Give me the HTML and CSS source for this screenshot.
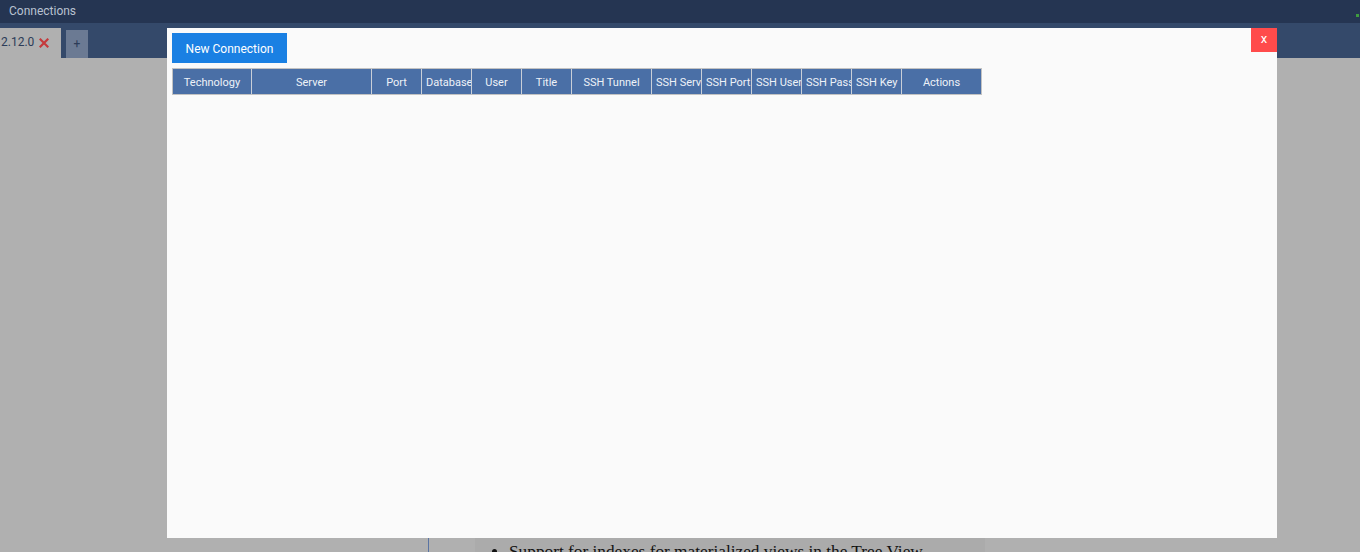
FILE: index.html
```html
<!DOCTYPE html>
<html lang="en">
<head>
    <meta charset="UTF-8">
    <title>Connections</title>
    <link rel="stylesheet" href="styles.css">
</head>
<body>
    <div class="title-bar">
        <span class="title">Connections</span>
        <span class="status-dot"></span>
    </div>

    <div class="tab-bar">
        <div class="tab active">
            <span class="tab-name">2.12.0</span>
            <svg class="tab-close" width="10" height="10" viewBox="0 0 10 10">
                <path d="M1.5 1.5 L8.5 8.5 M8.5 1.5 L1.5 8.5" stroke="#c53a3c" stroke-width="2.2" stroke-linecap="square"/>
            </svg>
        </div>
        <div class="tab add">+</div>
    </div>

    <div class="workspace">
        <div class="gutter"></div>
        <div class="panel">
            <div class="notes">
                <ul>
                    <li>Support for indexes for materialized views in the Tree View</li>
                </ul>
            </div>
        </div>
    </div>

    <div class="modal">
        <button class="modal-close">x</button>
        <button class="btn-new">New Connection</button>
        <table class="conn-table">
            <thead>
                <tr>
                    <th class="w-tech">Technology</th>
                    <th class="w-server">Server</th>
                    <th>Port</th>
                    <th>Database</th>
                    <th>User</th>
                    <th>Title</th>
                    <th class="w-wide">SSH Tunnel</th>
                    <th>SSH Server</th>
                    <th>SSH Port</th>
                    <th>SSH User</th>
                    <th>SSH Password</th>
                    <th>SSH Key</th>
                    <th class="w-wide">Actions</th>
                </tr>
            </thead>
            <tbody></tbody>
        </table>
    </div>
</body>
</html>
```

FILE: styles.css
```css
body {
    margin: 0;
    font-family: Roboto, 'Liberation Sans', Arial, sans-serif;
    background: #b0b0b0;
    height: 552px;
    overflow: hidden;
}
.title-bar {
    height: 23px;
    background: #253552;
    display: flex;
    align-items: center;
    justify-content: space-between;
    padding: 0 1px 0 9px;
}
.title {
    color: #b9c2d1;
    font-size: 12px;
    margin-top: -2px;
}
.status-dot {
    width: 3px;
    height: 3px;
    background: #3e9c3e;
    margin-top: 8px;
}
.tab-bar {
    height: 35px;
    background: #34496a;
    display: flex;
    align-items: flex-end;
}
.tab {
    box-sizing: border-box;
}
.tab.active {
    width: 61px;
    height: 30px;
    background: #b0b0b0;
    display: flex;
    align-items: center;
    padding: 0 0 2px 1px;
}
.tab-name {
    color: #2c3c58;
    font-size: 12px;
}
.tab-close {
    margin-left: 5px;
    margin-top: 2px;
}
.tab.add {
    width: 22px;
    height: 28px;
    margin-left: 5px;
    background: #6b7a93;
    color: #2c3c58;
    font-size: 12px;
    display: flex;
    align-items: center;
    justify-content: center;
}
.workspace {
    display: flex;
    height: 494px;
}
.gutter {
    width: 428px;
}
.panel {
    border-left: 1px solid #5a74a3;
    padding-left: 46px;
    width: 510px;
}
.notes {
    background: #ababab;
    height: 100%;
    padding-top: 484px;
    box-sizing: border-box;
    font-family: 'Liberation Serif', 'Times New Roman', serif;
    font-size: 17.3px;
    color: #111;
}
.notes ul {
    margin: 0;
    padding: 0 0 0 34px;
    list-style: disc;
}
.modal {
    position: absolute;
    left: 167px;
    top: 28px;
    width: 1110px;
    height: 510px;
    background: #fafafa;
    padding: 5px;
    box-sizing: border-box;
}
.modal-close {
    position: absolute;
    right: 0;
    top: 0;
    width: 26px;
    height: 24px;
    border: none;
    background: #ff4b4b;
    color: #fff;
    font-family: Roboto, sans-serif;
    font-size: 13px;
    padding: 0 0 4px 0;
    cursor: pointer;
}
.btn-new {
    display: block;
    height: 30px;
    width: 115px;
    border: none;
    background: #1a80e3;
    color: #fff;
    font-family: Roboto, sans-serif;
    font-size: 12px;
    padding: 2px 0 0 0;
    cursor: pointer;
}
.conn-table {
    margin-top: 5px;
    border-collapse: separate;
    border-spacing: 0;
    table-layout: fixed;
    width: 810px;
    border: 1px solid #c2c2c2;
    border-right: none;
}
.conn-table th {
    box-sizing: border-box;
    width: 50px;
    height: 25px;
    padding: 2px 4px 0 4px;
    background: #4a6fa6;
    color: #eef2f8;
    font-size: 11px;
    font-weight: normal;
    white-space: nowrap;
    overflow: hidden;
    text-align: center;
    border-right: 1px solid #c9cfd8;
}
.conn-table th:last-child {
    border-right-color: #c2c2c2;
}
.conn-table th.w-tech {
    width: 79px;
}
.conn-table th.w-server {
    width: 120px;
}
.conn-table th.w-wide {
    width: 80px;
}
```
